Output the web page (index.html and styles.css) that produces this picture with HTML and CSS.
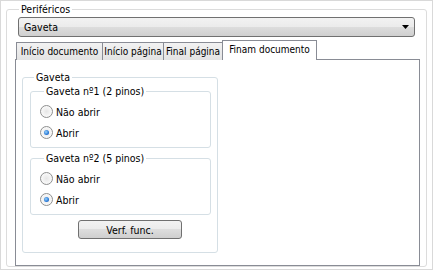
FILE: index.html
```html
<!DOCTYPE html>
<html lang="pt">

<head>
    <meta charset="UTF-8">
    <meta name="viewport" content="width=device-width, initial-scale=1.0">
    <title>Periféricos</title>
    <link rel="stylesheet" href="styles.css">
</head>

<body>
    <div class="window">
        <fieldset class="group outer">
            <legend>Periféricos</legend>
            <div class="select">
                <span>Gaveta</span>
                <svg width="7" height="4" viewBox="0 0 7 4"><path d="M0 0h7L3.5 4z" fill="#000"/></svg>
            </div>
            <div class="tabs">
                <div class="tab t1">Início documento</div>
                <div class="tab t2">Início página</div>
                <div class="tab t3">Final página</div>
                <div class="tab t4 active">Finam documento</div>
            </div>
            <div class="panel">
                <fieldset class="group box">
                    <legend>Gaveta</legend>
                    <fieldset class="group sub">
                        <legend>Gaveta nº1 (2 pinos)</legend>
                        <label class="radio"><span class="dot"></span>Não abrir</label>
                        <label class="radio"><span class="dot on"></span>Abrir</label>
                    </fieldset>
                    <fieldset class="group sub">
                        <legend>Gaveta nº2 (5 pinos)</legend>
                        <label class="radio"><span class="dot"></span>Não abrir</label>
                        <label class="radio"><span class="dot on"></span>Abrir</label>
                    </fieldset>
                    <button class="btn">Verf. func.</button>
                </fieldset>
            </div>
        </fieldset>
    </div>
</body>

</html>
```

FILE: styles.css
```css
* {
    box-sizing: border-box;
}

body {
    margin: 0;
    font-family: "DejaVu Sans", sans-serif;
    font-stretch: condensed;
    font-size: 10.5px;
    color: #000;
}

.window {
    width: 433px;
    height: 270px;
    padding: 2px 5px;
    border: 1px solid #d9d9d9;
    background-color: #fff;
}

.group {
    margin: 0;
    padding: 0;
    border: 1px solid #d5dfe5;
    border-radius: 3px;
    min-width: 0;
}

.group>legend {
    margin-left: 4px;
    padding: 0 2px;
    line-height: 13px;
}

.outer {
    height: 264px;
    padding: 1px 6px 0 8px;
    border-color: #dcdcdc;
}

.select {
    display: flex;
    align-items: center;
    justify-content: space-between;
    height: 20px;
    margin: 0 5px 0 3px;
    padding: 0 5px 0 5px;
    border: 1px solid #707070;
    border-radius: 3px;
    background: linear-gradient(#f2f2f2 0%, #ebebeb 50%, #dddddd 50%, #cfcfcf 100%);
}

.tabs {
    display: flex;
    align-items: flex-end;
    height: 20px;
    margin: 3px 0 -1px 1px;
    font-size: 10px;
}

.tab {
    flex-shrink: 0;
    height: 18px;
    line-height: 17px;
    white-space: nowrap;
    text-align: center;
    border: 1px solid #898c95;
    border-bottom: none;
    background: linear-gradient(#f2f2f2, #e3e3e3);
    margin-left: -1px;
}

.t1 {
    width: 87px;
    margin-left: 0;
}

.t2 {
    width: 62px;
}

.t3 {
    width: 60px;
}

.t4 {
    width: 95px;
}

.tab.active {
    position: relative;
    height: 20px;
    line-height: 18px;
    background: #fff;
}

.panel {
    height: 207px;
    padding: 11px 0 0 6px;
    border: 1px solid #898c95;
    background-color: #fff;
}

.box {
    width: 196px;
    padding: 1px 6px 13px 7px;
}

.sub {
    padding: 3px 0 4px 9px;
    margin-bottom: 4px;
}

.radio {
    display: flex;
    align-items: center;
    height: 21px;
}

.dot {
    display: inline-flex;
    align-items: center;
    justify-content: center;
    width: 13px;
    height: 13px;
    margin-right: 3px;
    border: 1px solid #8e8f8f;
    border-radius: 50%;
    background: radial-gradient(circle at 50% 50%, #e6e6e6 0%, #f4f4f4 50%, #fff 100%);
}

.dot.on::after {
    content: "";
    width: 5px;
    height: 5px;
    border-radius: 50%;
    background: radial-gradient(circle at 40% 40%, #9ad2fb 0%, #2a7bd8 60%, #1a4c9a 100%);
}

.btn {
    display: block;
    width: 104px;
    height: 19px;
    margin: 5px 0 0 48px;
    padding: 0;
    font: inherit;
    border: 1px solid #707070;
    border-radius: 3px;
    background: linear-gradient(#f2f2f2 0%, #ebebeb 50%, #dddddd 50%, #cfcfcf 100%);
}
```
